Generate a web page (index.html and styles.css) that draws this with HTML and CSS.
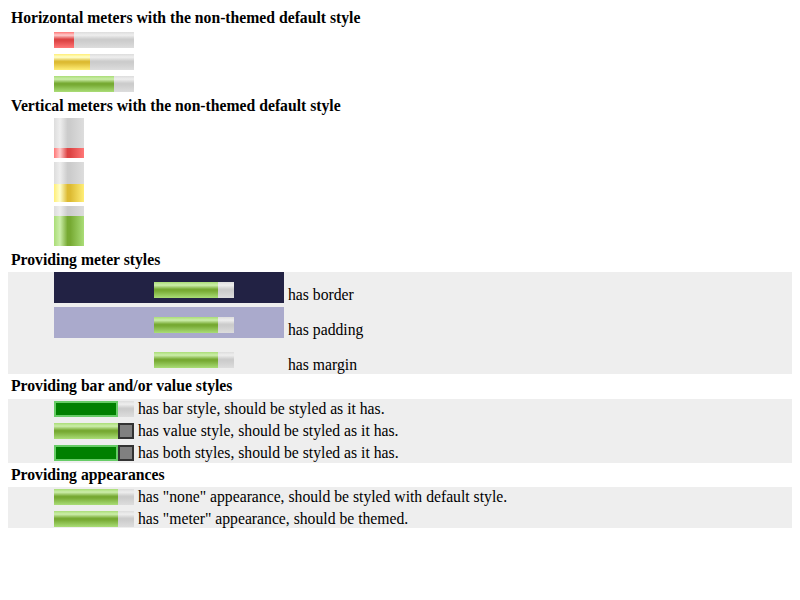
FILE: index.html
```html
<!DOCTYPE html>
<html>
<head>
<meta charset="utf-8">
<title>Meter styles</title>
<link rel="stylesheet" href="styles.css">
</head>
<body>
<div class="page">
  <h3 class="heading">Horizontal meters with the non-themed default style</h3>
  <div class="hmeters">
    <div class="meter"><div class="fill bad" style="width:25%"></div></div>
    <div class="meter"><div class="fill warn" style="width:45%"></div></div>
    <div class="meter"><div class="fill good" style="width:75%"></div></div>
  </div>

  <h3 class="heading">Vertical meters with the non-themed default style</h3>
  <div class="vmeters">
    <div class="vmeter"><div class="vfill bad" style="height:25%"></div></div>
    <div class="vmeter"><div class="vfill warn" style="height:45%"></div></div>
    <div class="vmeter"><div class="vfill good" style="height:75%"></div></div>
  </div>

  <h3 class="heading">Providing meter styles</h3>
  <div class="section section-styles">
    <div class="row">
      <div class="box box-border"><div class="meter"><div class="fill good" style="width:80%"></div></div></div>
      <span class="label">has border</span>
    </div>
    <div class="row">
      <div class="box box-padding"><div class="meter"><div class="fill good" style="width:80%"></div></div></div>
      <span class="label">has padding</span>
    </div>
    <div class="row">
      <div class="box box-margin"><div class="meter"><div class="fill good" style="width:80%"></div></div></div>
      <span class="label">has margin</span>
    </div>
  </div>

  <h3 class="heading heading-tight">Providing bar and/or value styles</h3>
  <div class="section section-bars">
    <div class="row">
      <div class="meter"><div class="fill solid" style="width:80%"></div><div class="rest"></div></div>
      <span class="label">has bar style, should be styled as it has.</span>
    </div>
    <div class="row">
      <div class="meter"><div class="fill good" style="width:80%"></div><div class="rest grey"></div></div>
      <span class="label">has value style, should be styled as it has.</span>
    </div>
    <div class="row">
      <div class="meter"><div class="fill solid" style="width:80%"></div><div class="rest grey"></div></div>
      <span class="label">has both styles, should be styled as it has.</span>
    </div>
  </div>

  <h3 class="heading heading-tight">Providing appearances</h3>
  <div class="section section-appear">
    <div class="row">
      <div class="meter"><div class="fill good" style="width:80%"></div></div>
      <span class="label">has "none" appearance, should be styled with default style.</span>
    </div>
    <div class="row">
      <div class="meter"><div class="fill good" style="width:80%"></div></div>
      <span class="label">has "meter" appearance, should be themed.</span>
    </div>
  </div>
</div>
</body>
</html>
```

FILE: styles.css
```css
html, body {
  margin: 0;
  padding: 0;
  background: #ffffff;
}

body {
  font-family: "Liberation Serif", "Times New Roman", serif;
  font-size: 15.7px;
  color: #000000;
}

.page {
  display: flex;
  flex-direction: column;
  padding: 4px 8px 0 8px;
}

.heading {
  font-size: 15.7px;
  font-weight: bold;
  line-height: 18px;
  margin: 5px 0 3px 0;
  padding-left: 3px;
}

.heading-tight {
  margin-top: 3px;
}

.hmeters {
  display: flex;
  flex-direction: column;
  gap: 6px;
  padding-left: 46px;
  margin-top: 2px;
}

.meter {
  width: 80px;
  height: 16px;
  display: flex;
  flex: none;
  background: linear-gradient(to bottom, #ddd, #eee 20%, #ccc 45%, #ccc 55%, #ddd);
}

.fill {
  height: 100%;
  box-sizing: border-box;
  flex: none;
}

.fill.good {
  background: linear-gradient(to bottom, #ad7, #cea 20%, #7a3 45%, #7a3 55%, #ad7);
}

.fill.warn {
  background: linear-gradient(to bottom, #fe7, #ffc 20%, #db3 45%, #db3 55%, #fe7);
}

.fill.bad {
  background: linear-gradient(to bottom, #f77, #fcc 20%, #d44 45%, #d44 55%, #f77);
}

.fill.solid {
  background: #008000;
  border: 2px solid #66cc66;
}

.rest {
  flex: 1;
  height: 100%;
  box-sizing: border-box;
}

.rest.grey {
  background: #808080;
  border: 2px solid #333333;
}

.vmeters {
  display: flex;
  flex-direction: column;
  gap: 4px;
  padding-left: 46px;
}

.vmeter {
  width: 30px;
  height: 40px;
  display: flex;
  flex-direction: column;
  justify-content: flex-end;
  background: linear-gradient(to right, #ddd, #eee 20%, #ccc 45%, #ccc 55%, #ddd);
}

.vfill {
  width: 100%;
}

.vfill.good {
  background: linear-gradient(to right, #ad7, #cea 20%, #7a3 45%, #7a3 55%, #ad7);
}

.vfill.warn {
  background: linear-gradient(to right, #fe7, #ffc 20%, #db3 45%, #db3 55%, #fe7);
}

.vfill.bad {
  background: linear-gradient(to right, #f77, #fcc 20%, #d44 45%, #d44 55%, #f77);
}

.section {
  background: #eeeeee;
  padding-left: 46px;
  display: flex;
  flex-direction: column;
}

.section-styles {
  gap: 4px;
  padding-bottom: 1px;
}

.section-bars {
  gap: 6px;
  padding-top: 2px;
  padding-bottom: 2px;
  margin-top: 1px;
}

.section-appear {
  gap: 6px;
  padding-top: 2px;
  padding-bottom: 1px;
}

.row {
  display: flex;
  align-items: flex-end;
  gap: 4px;
}

.label {
  line-height: 16px;
  white-space: nowrap;
}

.box-border {
  border-style: solid;
  border-color: #222244;
  border-width: 10px 50px 5px 100px;
}

.box-padding {
  background: #aaaacc;
  padding: 10px 50px 5px 100px;
}

.box-margin {
  margin: 10px 50px 5px 100px;
}
```
